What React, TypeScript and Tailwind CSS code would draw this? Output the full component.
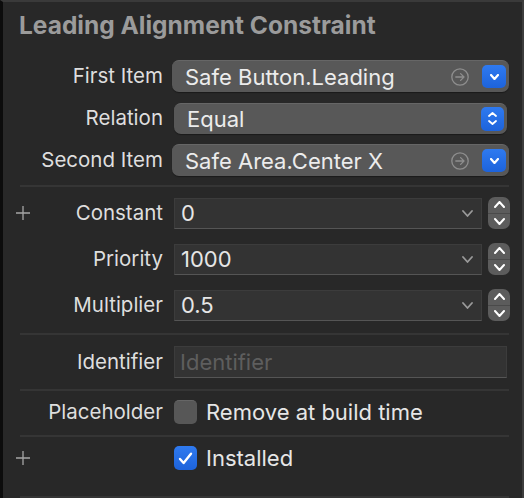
import React from "react";

function CircleArrow() {
  return (
    <svg width="18" height="18" viewBox="0 0 18 18" fill="none">
      <circle cx="9" cy="9" r="8.2" stroke="#8e8e8e" strokeWidth="1.3" />
      <path d="M4.8 9h8.2M9.6 5.6 13 9l-3.4 3.4" stroke="#8e8e8e" strokeWidth="1.3" strokeLinecap="round" strokeLinejoin="round" />
    </svg>
  );
}

function ChevronDown({ color = "#fff", w = 10, h = 6, sw = 2 }: { color?: string; w?: number; h?: number; sw?: number }) {
  return (
    <svg width={w} height={h} viewBox={`0 0 ${w} ${h}`} fill="none">
      <path d={`M1 1 ${w / 2} ${h - 1} ${w - 1} 1`} stroke={color} strokeWidth={sw} strokeLinecap="round" strokeLinejoin="round" />
    </svg>
  );
}

function ChevronUp({ color = "#fff", w = 10, h = 6, sw = 2 }: { color?: string; w?: number; h?: number; sw?: number }) {
  return (
    <svg width={w} height={h} viewBox={`0 0 ${w} ${h}`} fill="none">
      <path d={`M1 ${h - 1} ${w / 2} 1 ${w - 1} ${h - 1}`} stroke={color} strokeWidth={sw} strokeLinecap="round" strokeLinejoin="round" />
    </svg>
  );
}

function Plus() {
  return (
    <svg width="14" height="14" viewBox="0 0 14 14" fill="none">
      <path d="M7 0v14M0 7h14" stroke="#a5a5a5" strokeWidth="1.3" />
    </svg>
  );
}

function Label({ text, plus }: { text: string; plus?: boolean }) {
  return (
    <div className="flex w-[160px] shrink-0 items-center justify-between pl-[13px] text-[20.5px]">
      <span>{plus ? <Plus /> : null}</span>
      <span className="text-[#dedede]">{text}</span>
    </div>
  );
}

function Separator() {
  return <div className="ml-[17px] mr-[13px] h-[2px] bg-[#353535]" />;
}

function ItemPopup({ value }: { value: string }) {
  return (
    <div className="ml-[9px] flex h-[32px] w-[337px] items-center rounded-[7px] border-t border-[#666] bg-[#585858] pl-[13px] pr-[3px] shadow-[0_1px_1px_rgba(0,0,0,0.35)]">
      <span className="flex-1 text-[#ececec]">{value}</span>
      <CircleArrow />
      <div className="ml-[13px] flex h-[23px] w-[24px] items-center justify-center rounded-[5px] bg-gradient-to-b from-[#2f7af0] to-[#1d63db]">
        <ChevronDown w={9} h={6} sw={2.2} />
      </div>
    </div>
  );
}

function NumberCombo({ value }: { value: string }) {
  return (
    <div className="ml-[11px] flex items-center">
      <div className="flex h-[31px] w-[308px] items-center border border-[#3c3c3c] border-b-[#555] bg-[#333333] pl-[6px] pr-[8px]">
        <span className="flex-1 text-[#e6e6e6]">{value}</span>
        <ChevronDown color="#9a9a9a" w={11} h={7} sw={1.8} />
      </div>
      <div className="ml-[6px] flex h-[32px] w-[22px] flex-col overflow-hidden rounded-[7px] bg-[#5c5c5c]">
        <div className="flex flex-1 items-center justify-center border-b border-[#4a4a4a]">
          <ChevronUp w={11} h={7} sw={2} />
        </div>
        <div className="flex flex-1 items-center justify-center">
          <ChevronDown w={11} h={7} sw={2} />
        </div>
      </div>
    </div>
  );
}

export default function App() {
  return (
    <div className="h-[498px] w-[524px] overflow-hidden border-l-[3px] border-r-[2px] border-t-[2px] border-l-[#0c0c0c] border-r-[#3d3d3d] border-t-[#3a3a3a] bg-[#282828] font-[Inter,'Noto_Sans',sans-serif] text-[22px] leading-none">
      <div className="flex h-[46px] items-center pl-[16px] text-[24.5px] font-bold text-[#9b9b9b]">
        Leading Alignment Constraint
      </div>

      <div className="mt-[7px] flex h-[42px] items-center">
        <Label text="First Item" />
        <ItemPopup value="Safe Button.Leading" />
      </div>
      <div className="flex h-[42px] items-center">
        <Label text="Relation" />
        <div className="ml-[11px] flex h-[31px] w-[333px] items-center rounded-[7px] border-t border-[#666] bg-[#585858] pl-[13px] pr-[3px] shadow-[0_1px_1px_rgba(0,0,0,0.35)]">
          <span className="flex-1 text-[#ececec]">Equal</span>
          <div className="flex h-[24px] w-[23px] flex-col items-center justify-center gap-[3px] rounded-[5px] bg-gradient-to-b from-[#2f7af0] to-[#1d63db]">
            <ChevronUp w={9} h={5} sw={1.8} />
            <ChevronDown w={9} h={5} sw={1.8} />
          </div>
        </div>
      </div>
      <div className="flex h-[42px] items-center">
        <Label text="Second Item" />
        <ItemPopup value="Safe Area.Center X" />
      </div>

      <div className="mt-[4px]">
        <Separator />
      </div>

      <div className="mt-[3px] flex h-[46px] items-center">
        <Label text="Constant" plus />
        <NumberCombo value="0" />
      </div>
      <div className="flex h-[46px] items-center">
        <Label text="Priority" />
        <NumberCombo value="1000" />
      </div>
      <div className="flex h-[46px] items-center">
        <Label text="Multiplier" />
        <NumberCombo value="0.5" />
      </div>

      <div className="mt-[5px]">
        <Separator />
      </div>

      <div className="flex h-[54px] items-center">
        <Label text="Identifier" />
        <div className="ml-[11px] flex h-[32px] w-[333px] items-center border border-[#3c3c3c] border-b-[#555] bg-[#333333] pl-[5px]">
          <span className="text-[#5e5e5e]">Identifier</span>
        </div>
      </div>

      <Separator />

      <div className="flex h-[42px] items-center">
        <Label text="Placeholder" />
        <div className="ml-[11px] h-[24px] w-[23px] rounded-[5px] border-t border-[#666] bg-[#575757]" />
        <span className="ml-[9px] text-[#e6e6e6]">Remove at build time</span>
      </div>

      <div className="mt-[2px]">
        <Separator />
      </div>

      <div className="flex h-[42px] items-center">
        <Label text="" plus />
        <div className="ml-[11px] flex h-[24px] w-[23px] items-center justify-center rounded-[5px] bg-gradient-to-b from-[#2f7af0] to-[#1d63db]">
          <svg width="15" height="13" viewBox="0 0 15 13" fill="none">
            <path d="M2 7 5.6 11 13 1.8" stroke="#fff" strokeWidth="2.4" strokeLinecap="round" strokeLinejoin="round" />
          </svg>
        </div>
        <span className="ml-[9px] text-[#e6e6e6]">Installed</span>
      </div>

      <div className="mt-[17px]">
        <Separator />
      </div>
    </div>
  );
}
